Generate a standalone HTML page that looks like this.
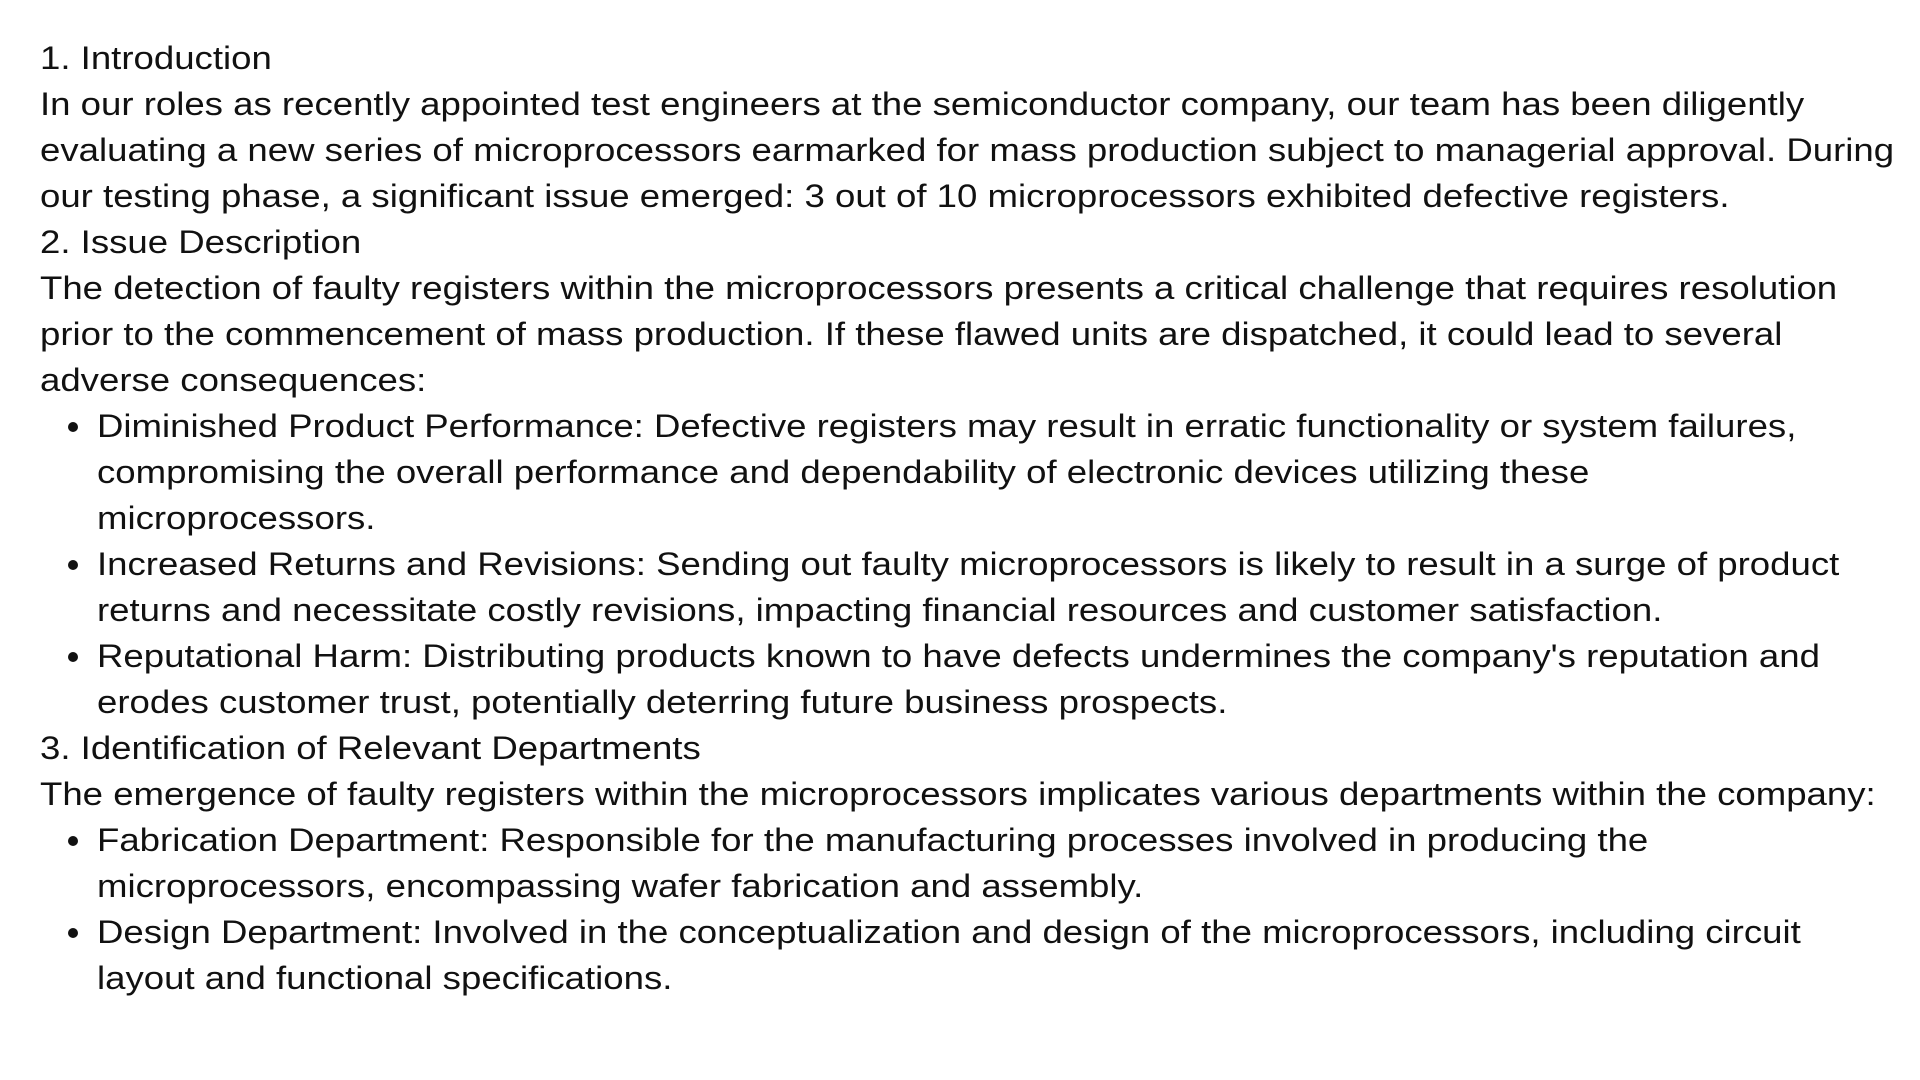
<!DOCTYPE html>
<html><head><meta charset="utf-8"><style>
html,body{margin:0;padding:0;background:#fff;width:1920px;height:1080px;overflow:hidden}
body{font-family:"Liberation Sans",sans-serif;font-size:32px;color:#111;line-height:46px}
.w{position:absolute;left:40px;top:35px}
.l,.b,.i{white-space:nowrap;height:46px}
.b{position:relative;padding-left:57px}
.b:before{content:"";position:absolute;left:28px;top:19px;width:10px;height:10px;border-radius:50%;background:#111}
.i{padding-left:57px}
span{display:inline-block;transform:scaleX(1.143);transform-origin:0 0}
</style></head><body><div class="w">
<div class="l"><span>1. Introduction</span></div>
<div class="l"><span>In our roles as recently appointed test engineers at the semiconductor company, our team has been diligently</span></div>
<div class="l"><span>evaluating a new series of microprocessors earmarked for mass production subject to managerial approval. During</span></div>
<div class="l"><span>our testing phase, a significant issue emerged: 3 out of 10 microprocessors exhibited defective registers.</span></div>
<div class="l"><span>2. Issue Description</span></div>
<div class="l"><span>The detection of faulty registers within the microprocessors presents a critical challenge that requires resolution</span></div>
<div class="l"><span>prior to the commencement of mass production. If these flawed units are dispatched, it could lead to several</span></div>
<div class="l"><span>adverse consequences:</span></div>
<div class="b"><span>Diminished Product Performance: Defective registers may result in erratic functionality or system failures,</span></div>
<div class="i"><span>compromising the overall performance and dependability of electronic devices utilizing these</span></div>
<div class="i"><span>microprocessors.</span></div>
<div class="b"><span>Increased Returns and Revisions: Sending out faulty microprocessors is likely to result in a surge of product</span></div>
<div class="i"><span>returns and necessitate costly revisions, impacting financial resources and customer satisfaction.</span></div>
<div class="b"><span>Reputational Harm: Distributing products known to have defects undermines the company's reputation and</span></div>
<div class="i"><span>erodes customer trust, potentially deterring future business prospects.</span></div>
<div class="l"><span>3. Identification of Relevant Departments</span></div>
<div class="l"><span>The emergence of faulty registers within the microprocessors implicates various departments within the company:</span></div>
<div class="b"><span>Fabrication Department: Responsible for the manufacturing processes involved in producing the</span></div>
<div class="i"><span>microprocessors, encompassing wafer fabrication and assembly.</span></div>
<div class="b"><span>Design Department: Involved in the conceptualization and design of the microprocessors, including circuit</span></div>
<div class="i"><span>layout and functional specifications.</span></div>
</div></body></html>
